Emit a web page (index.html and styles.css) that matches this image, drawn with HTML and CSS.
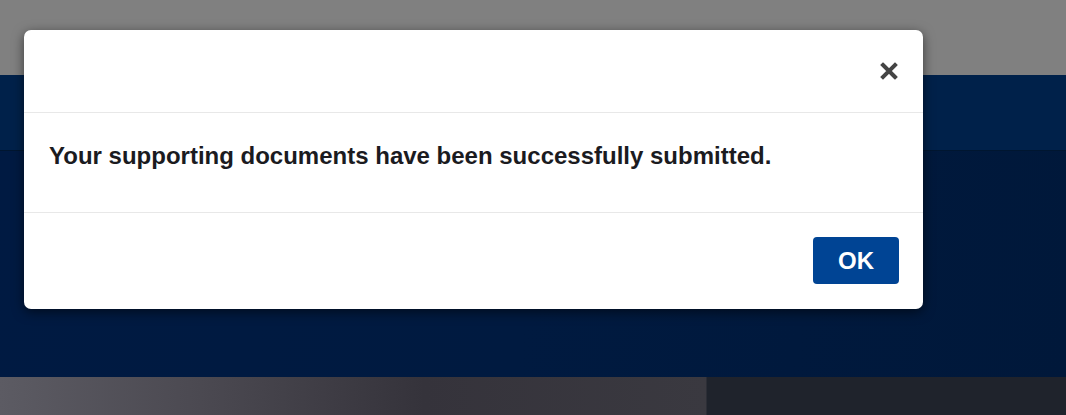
FILE: index.html
```html
<!DOCTYPE html>
<html>
<head>
<title>Supporting documents</title>
<link rel="stylesheet" href="styles.css">
</head>
<body>
<div class="page">
  <div class="topbar"></div>
  <div class="navbar"></div>
  <div class="hero"></div>
  <div class="strip">
    <div class="strip-left"></div>
    <div class="strip-right"></div>
  </div>
</div>

<div class="modal">
  <div class="modal-header">
    <button class="close" type="button" aria-label="Close">
      <svg width="18" height="18" viewBox="0 0 18 18"><path d="M3 3 L15 15 M15 3 L3 15" stroke="#444" stroke-width="4" stroke-linecap="square"/></svg>
    </button>
  </div>
  <div class="modal-body">
    <p class="message">Your supporting documents have been successfully submitted.</p>
  </div>
  <div class="modal-footer">
    <button class="btn-ok" type="button">OK</button>
  </div>
</div>
</body>
</html>
```

FILE: styles.css
```css
/* page under the dimmed overlay */

body
{ margin: 0;
  font-family: "Liberation Sans", Arial, sans-serif;
  background-color: #1f232c;
  overflow: hidden;
}

div.page
{ display: flex;
  flex-direction: column;
  height: 415px;
}

div.topbar
{ height: 75px;
  background-color: #808080;
}

div.navbar
{ height: 75px;
  background-color: #00214a;
  border-bottom: 1px solid #001630;
}

div.hero
{ height: 226px;
  background: linear-gradient(100deg, #001a42 0%, #001a40 50%, #00183a 100%);
}

div.strip
{ flex: 1;
  display: flex;
}

div.strip-left
{ width: 706px;
  background: linear-gradient(90deg, #5c5b63 0%, #4a4850 30%, #35333b 60%, #3a3940 100%);
  border-right: 1px solid #2c2e36;
}

div.strip-right
{ flex: 1;
  background-color: #1f232c;
}

/* Modal */

div.modal
{ position: absolute;
  left: 24px;
  top: 30px;
  width: 899px;
  background-color: #fff;
  border-radius: 7px;
  box-shadow: 0 3px 12px rgba(0, 0, 0, 0.55);
}

div.modal-header
{ height: 82px;
  display: flex;
  justify-content: flex-end;
  align-items: center;
  padding-right: 25px;
  border-bottom: 1px solid #e8e8e8;
}

button.close
{ border: 0;
  background: none;
  padding: 0;
  margin-top: 0;
  width: 18px;
  height: 18px;
  cursor: pointer;
}

button.close svg
{ display: block;
}

div.modal-body
{ padding: 29px 25px 42px 25px;
  border-bottom: 1px solid #e8e8e8;
}

p.message
{ margin: 0;
  font-size: 24px;
  line-height: 28px;
  font-weight: bold;
  color: #1b1b1f;
}

div.modal-footer
{ display: flex;
  justify-content: flex-end;
  padding: 24px 24px 25px 24px;
}

button.btn-ok
{ width: 86px;
  height: 47px;
  border: 0;
  border-radius: 4px;
  background-color: #004494;
  color: #fff;
  font-family: "Liberation Sans", Arial, sans-serif;
  font-size: 24px;
  font-weight: bold;
  cursor: pointer;
}
```
